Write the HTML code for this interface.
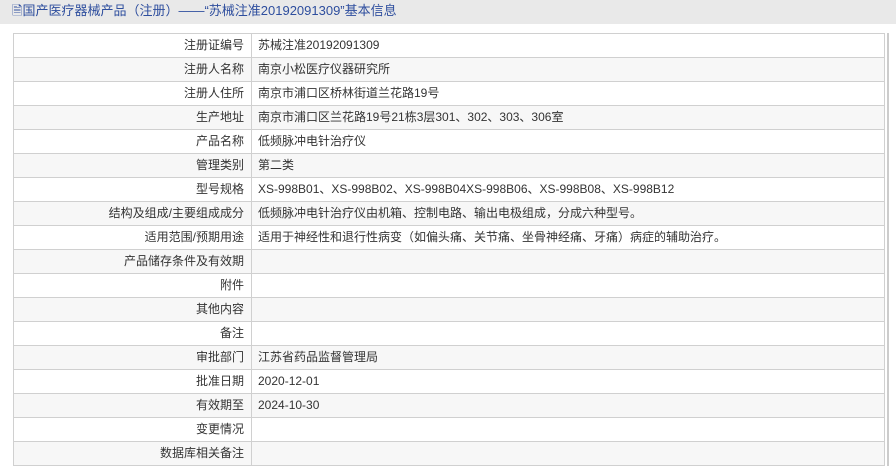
<!DOCTYPE html>
<html><head><meta charset="utf-8"><style>
body{margin:0;width:896px;height:472px;background:#fff;font-family:"Liberation Sans","Noto Sans CJK SC",sans-serif;overflow:hidden}
.hd{height:24px;background:#e9e9e9;color:#2e4e9e;font-size:13px;line-height:22px;padding-left:12px}
.wrap{position:absolute;left:13px;top:33px;width:874px;border-right:2px solid #ccc}
table{border-collapse:collapse;width:872px;font-size:12px;color:#333}
td{border:1px solid #d0d0d0;height:23px;padding:0 6px;line-height:23px;white-space:nowrap}
td.l{width:224px;text-align:right;padding-right:7px}
tr:nth-child(even) td{background:#f7f7f7}
</style></head><body>
<div class="hd">🗎国产医疗器械产品（注册）——“苏械注准20192091309”基本信息</div>
<div class="wrap"><table>
<tr><td class="l">注册证编号</td><td>苏械注准20192091309</td></tr>
<tr><td class="l">注册人名称</td><td>南京小松医疗仪器研究所</td></tr>
<tr><td class="l">注册人住所</td><td>南京市浦口区桥林街道兰花路19号</td></tr>
<tr><td class="l">生产地址</td><td>南京市浦口区兰花路19号21栋3层301、302、303、306室</td></tr>
<tr><td class="l">产品名称</td><td>低频脉冲电针治疗仪</td></tr>
<tr><td class="l">管理类别</td><td>第二类</td></tr>
<tr><td class="l">型号规格</td><td>XS-998B01、XS-998B02、XS-998B04XS-998B06、XS-998B08、XS-998B12</td></tr>
<tr><td class="l">结构及组成/主要组成成分</td><td>低频脉冲电针治疗仪由机箱、控制电路、输出电极组成，分成六种型号。</td></tr>
<tr><td class="l">适用范围/预期用途</td><td>适用于神经性和退行性病变（如偏头痛、关节痛、坐骨神经痛、牙痛）病症的辅助治疗。</td></tr>
<tr><td class="l">产品储存条件及有效期</td><td></td></tr>
<tr><td class="l">附件</td><td></td></tr>
<tr><td class="l">其他内容</td><td></td></tr>
<tr><td class="l">备注</td><td></td></tr>
<tr><td class="l">审批部门</td><td>江苏省药品监督管理局</td></tr>
<tr><td class="l">批准日期</td><td>2020-12-01</td></tr>
<tr><td class="l">有效期至</td><td>2024-10-30</td></tr>
<tr><td class="l">变更情况</td><td></td></tr>
<tr><td class="l">数据库相关备注</td><td></td></tr>
</table></div>
</body></html>
